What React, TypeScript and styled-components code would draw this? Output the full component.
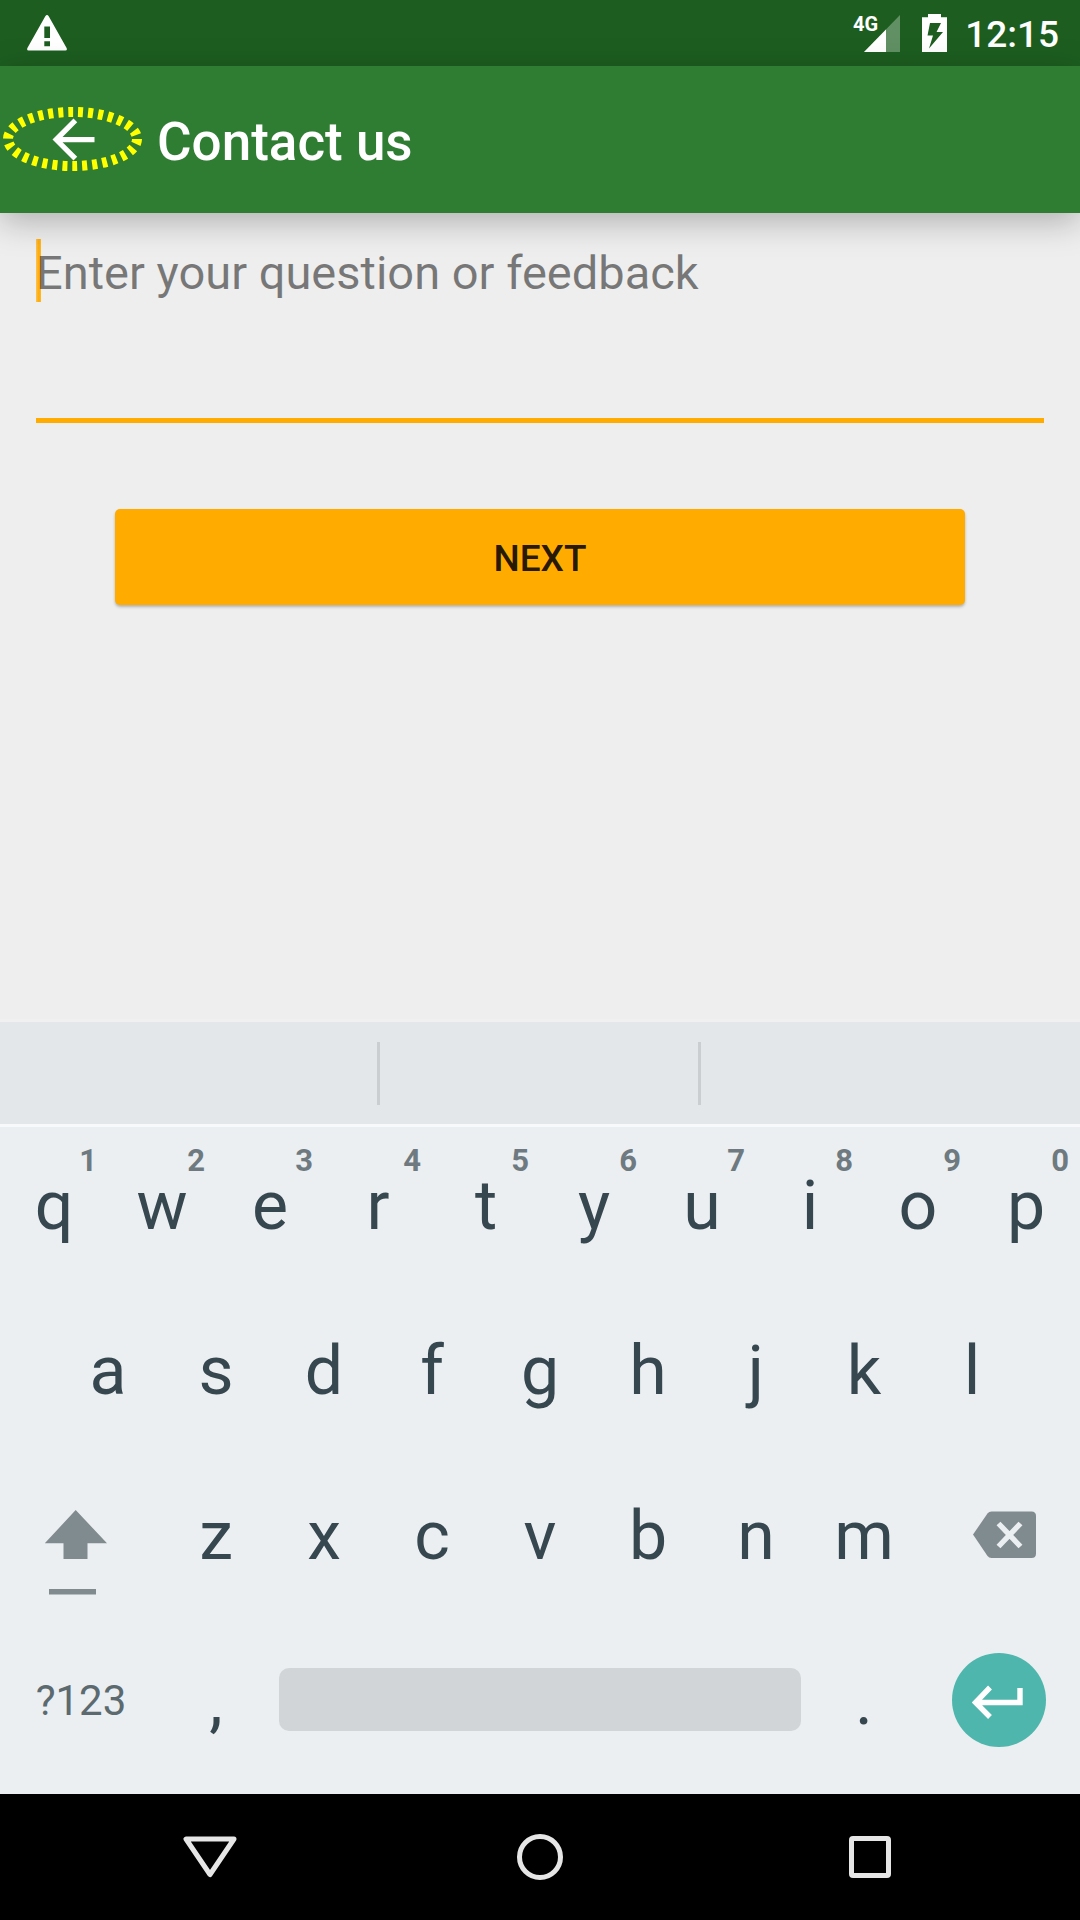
import React from 'react';
import styled, { createGlobalStyle } from 'styled-components';

const GlobalStyle = createGlobalStyle`
  *, *::before, *::after { box-sizing: border-box; }
  body { margin: 0; background: #eeeeee; font-family: Roboto, "Noto Sans", sans-serif; }
  button { border: 0; padding: 0; margin: 0; background: none; font: inherit; color: inherit; cursor: pointer; }
  svg { display: block; }
`;

const Screen = styled.div`
  display: flex;
  flex-direction: column;
  min-height: 100vh;
  background: #eeeeee;
`;

const StatusBar = styled.div`
  display: flex;
  align-items: center;
  justify-content: space-between;
  height: 66px;
  padding: 0 21px 0 27px;
  background: #1d5e20;
  color: #ffffff;
`;

const StatusIcons = styled.div`
  display: flex;
  align-items: center;
`;

const Signal = styled.div`
  position: relative;
  margin-right: 22px;
`;

const NetworkLabel = styled.span`
  position: absolute;
  top: 0;
  right: 22px;
  font-size: 20px;
  line-height: 18px;
  font-weight: 700;
`;

const Clock = styled.time`
  padding: 3px 0 0 18px;
  font-size: 37px;
  line-height: 44px;
  font-weight: 500;
`;

const AppBar = styled.header`
  position: relative;
  z-index: 1;
  display: flex;
  align-items: center;
  height: 147px;
  background: #2f7d32;
  color: #ffffff;
  box-shadow: 0 8px 32px rgba(0, 0, 0, 0.27);
`;

const BackButton = styled.button`
  position: relative;
  display: grid;
  place-items: center;
  width: 147px;
  height: 147px;
`;

const Highlight = styled.svg`
  position: absolute;
  inset: 0;
`;

const Title = styled.h1`
  margin: 0;
  padding: 5px 0 0 10px;
  font-size: 53px;
  line-height: 64px;
  font-weight: 500;
`;

const Form = styled.form`
  flex: 1;
  display: flex;
  flex-direction: column;
  padding: 26px 36px 0;
`;

const Field = styled.div`
  position: relative;
  display: flex;
`;

const Cursor = styled.span`
  position: absolute;
  top: 0;
  left: 0;
  width: 5px;
  height: 63px;
  background: linear-gradient(90deg, #fbc254, #ffab00 60%, #fdb93a);
`;

const Feedback = styled.textarea`
  position: relative;
  flex: 1;
  height: 184px;
  padding: 0;
  border: 0;
  border-bottom: 5px solid #ffab00;
  border-radius: 0;
  outline: none;
  resize: none;
  overflow: hidden;
  background: transparent;
  color: #212121;
  caret-color: transparent;
  font-family: inherit;
  font-size: 47px;
  line-height: 68px;

  &::placeholder {
    color: rgba(0, 0, 0, 0.5);
    opacity: 1;
  }
`;

const NextButton = styled.button`
  height: 96px;
  margin: 86px 79px 0;
  padding-top: 3px;
  border-radius: 5px;
  background: #ffab00;
  color: rgba(0, 0, 0, 0.87);
  font-size: 37px;
  line-height: 44px;
  font-weight: 500;
  box-shadow: 0 2px 3px rgba(0, 0, 0, 0.25);
`;

const Suggestions = styled.div`
  display: grid;
  grid-template-columns: 1fr 3px 318px 3px 1fr;
  align-items: center;
  height: 108px;
  padding-right: 2px;
  border-top: 3px solid #f0f0f0;
  border-bottom: 3px solid #f7f9fa;
  background: #e3e7ea;
`;

const Divider = styled.span<{ $column: number }>`
  grid-column: ${(p) => p.$column};
  height: 63px;
  background: #caced1;
`;

const Keyboard = styled.div`
  display: flex;
  flex-direction: column;
  gap: 7px;
  padding-bottom: 14px;
  background: #ebeff2;
  color: #37474f;
`;

const KeyRow = styled.div<{ $inset?: boolean }>`
  display: flex;
  height: 158px;
  padding: 0 ${(p) => (p.$inset ? '5%' : '0')};
`;

const Key = styled.button<{ $span?: number; $small?: boolean; $graphic?: boolean }>`
  position: relative;
  flex: ${(p) => p.$span ?? 2} 1 0;
  display: grid;
  place-items: center;
  min-width: 0;
  padding-bottom: ${(p) => (p.$graphic ? 3 : 0)}px;
  font-size: ${(p) => (p.$small ? 42 : 68)}px;
  line-height: 80px;
  color: ${(p) => (p.$small ? '#5c6a70' : 'inherit')};
`;

const KeyHint = styled.span`
  position: absolute;
  top: 16px;
  right: 11px;
  font-size: 31px;
  line-height: 36px;
  font-weight: 700;
  color: #6e7a80;
`;

const SpaceBar = styled.span`
  width: 522px;
  max-width: 97%;
  height: 63px;
  border-radius: 10px;
  background: #d1d5d8;
`;

const EnterDisc = styled.span`
  display: grid;
  place-items: center;
  width: 94px;
  height: 94px;
  border-radius: 50%;
  background: #4eb6ac;
`;

const NavBar = styled.nav`
  display: grid;
  grid-template-columns: repeat(3, 1fr);
  height: 126px;
  padding: 0 45px;
  background: #000000;
`;

const NavButton = styled.button`
  display: grid;
  place-items: center;
`;

const topRow = ['q', 'w', 'e', 'r', 't', 'y', 'u', 'i', 'o', 'p'];
const homeRow = ['a', 's', 'd', 'f', 'g', 'h', 'j', 'k', 'l'];
const bottomRow = ['z', 'x', 'c', 'v', 'b', 'n', 'm'];

export default function App() {
  return (
    <Screen>
      <GlobalStyle />
      <StatusBar>
        <svg width="40" height="36" viewBox="0 0 40 36" role="img" aria-label="Warning">
          <path
            fill="#ffffff"
            fillRule="evenodd"
            d="M18.3 1.2Q20 -1.2 21.7 1.2L39.6 33Q40.6 35.6 38.4 35.6H1.6Q-.6 35.6 .4 33ZM17.3 11.5V23H23V11.5ZM17.3 26.2V31.2H23V26.2Z"
          />
        </svg>
        <StatusIcons>
          <Signal>
            <NetworkLabel>4G</NetworkLabel>
            <svg width="36" height="37" viewBox="0 0 36 37" aria-hidden="true">
              <path fill="#619064" d="M36 0V37H0Z" />
              <path fill="#ffffff" d="M22 14.5V37H0Z" />
            </svg>
          </Signal>
          <svg width="25" height="38" viewBox="0 0 25 38" role="img" aria-label="Charging">
            <path
              fill="#ffffff"
              fillRule="evenodd"
              d="M6 0H19V3.2H25V38H0V3.2H6ZM8 9L5.5 21.5H11L7 34.5L21 18H14.5L19 9Z"
            />
          </svg>
          <Clock>12:15</Clock>
        </StatusIcons>
      </StatusBar>

      <AppBar>
        <BackButton type="button" aria-label="Back">
          <svg width="63" height="63" viewBox="0 0 24 24" aria-hidden="true">
            <path fill="#ffffff" d="M20 11H7.83l5.59-5.59L12 4l-8 8 8 8 1.41-1.41L7.83 13H20v-2z" />
          </svg>
          <Highlight width="147" height="147" viewBox="0 0 147 147" aria-hidden="true">
            <ellipse
              cx="72.5"
              cy="73"
              rx="64.5"
              ry="27"
              fill="none"
              stroke="#ffff00"
              strokeWidth="10"
              strokeDasharray="5 5"
            />
          </Highlight>
        </BackButton>
        <Title>Contact us</Title>
      </AppBar>

      <Form onSubmit={(e) => e.preventDefault()}>
        <Field>
          <Cursor />
          <Feedback
            aria-label="Enter your question or feedback"
            placeholder="Enter your question or feedback"
          />
        </Field>
        <NextButton type="submit">NEXT</NextButton>
      </Form>

      <Suggestions>
        <Divider $column={2} />
        <Divider $column={4} />
      </Suggestions>

      <Keyboard>
        <KeyRow>
          {topRow.map((letter, i) => (
            <Key type="button" key={letter}>
              {letter}
              <KeyHint>{(i + 1) % 10}</KeyHint>
            </Key>
          ))}
        </KeyRow>
        <KeyRow $inset>
          {homeRow.map((letter) => (
            <Key type="button" key={letter}>
              {letter}
            </Key>
          ))}
        </KeyRow>
        <KeyRow>
          <Key type="button" $span={3} aria-label="Shift">
            <svg width="74" height="118" viewBox="0 0 74 118" aria-hidden="true">
              <path fill="#808b90" d="M31.7 33L63 66.3H43.5V82H19.5V66.3H.8Z" />
              <path fill="#808b90" d="M5 112H52V117.5H5Z" />
            </svg>
          </Key>
          {bottomRow.map((letter) => (
            <Key type="button" key={letter}>
              {letter}
            </Key>
          ))}
          <Key type="button" $span={3} $graphic aria-label="Backspace">
            <svg width="75" height="48" viewBox="0 0 75 48" aria-hidden="true">
              <path
                fill="#808b90"
                d="M11 23.5L25.500 2.5Q27 .5 29.500 .5H69.500Q74 .5 74 5V42.5Q74 47 69.500 47H29.500Q27 47 25.500 45Z"
              />
              <path stroke="#ebeff2" strokeWidth="5.4" d="M36.500 12.5L58.500 35.500M58.500 12.5L36.500 35.500" />
            </svg>
          </Key>
        </KeyRow>
        <KeyRow>
          <Key type="button" $span={3} $small>
            ?123
          </Key>
          <Key type="button">,</Key>
          <Key type="button" $span={10} $graphic aria-label="Space">
            <SpaceBar />
          </Key>
          <Key type="button">.</Key>
          <Key type="button" $span={3} $graphic aria-label="Enter">
            <EnterDisc>
              <svg width="54" height="40" viewBox="0 0 54 40" aria-hidden="true">
                <path
                  fill="none"
                  stroke="#ffffff"
                  strokeWidth="5.4"
                  d="M48 8V22.500H5M18 7.500L3.500 22.500L18 37"
                />
              </svg>
            </EnterDisc>
          </Key>
        </KeyRow>
      </Keyboard>

      <NavBar aria-label="System">
        <NavButton type="button" aria-label="Hide keyboard">
          <svg width="54" height="42" viewBox="0 0 54 42" aria-hidden="true">
            <path
              fill="none"
              stroke="#e6e6e6"
              strokeWidth="5"
              strokeLinejoin="round"
              d="M3 3H51L27 38.500Z"
            />
          </svg>
        </NavButton>
        <NavButton type="button" aria-label="Home">
          <svg width="48" height="48" viewBox="0 0 48 48" aria-hidden="true">
            <circle cx="24" cy="24" r="20.5" fill="none" stroke="#e6e6e6" strokeWidth="5" />
          </svg>
        </NavButton>
        <NavButton type="button" aria-label="Overview">
          <svg width="42" height="42" viewBox="0 0 42 42" aria-hidden="true">
            <rect x="2.5" y="2.5" width="37" height="37" rx="1.5" fill="none" stroke="#e6e6e6" strokeWidth="5" />
          </svg>
        </NavButton>
      </NavBar>
    </Screen>
  );
}
